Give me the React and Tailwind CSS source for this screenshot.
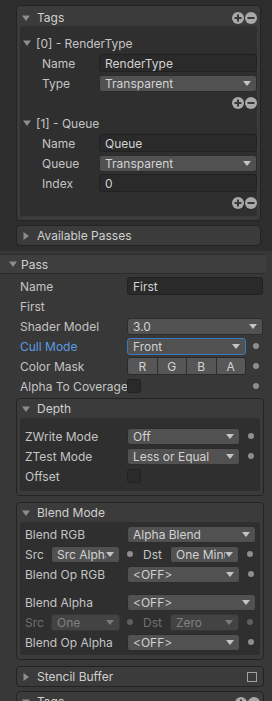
import React from 'react';

const TriDown = ({ c = '#8c8c8c' }) => (
  <svg width="8" height="8" viewBox="0 0 8 8" className="shrink-0">
    <polygon points="0,1.5 8,1.5 4,7" fill={c} />
  </svg>
);

const TriRight = ({ c = '#8c8c8c' }) => (
  <svg width="8" height="8" viewBox="0 0 8 8" className="shrink-0">
    <polygon points="1.5,0 7,4 1.5,8" fill={c} />
  </svg>
);

const Arrow = ({ c = '#c4c4c4' }) => (
  <svg width="8" height="5" viewBox="0 0 8 5" className="shrink-0">
    <polygon points="0,0 8,0 4,5" fill={c} />
  </svg>
);

const PlusMinus = () => (
  <div className="flex items-center gap-[1px]">
    <svg width="12" height="12" viewBox="0 0 12 12">
      <circle cx="6" cy="6" r="6" fill="#a9a9a9" />
      <path d="M6 2.5v7M2.5 6h7" stroke="#383838" strokeWidth="2" />
    </svg>
    <svg width="12" height="12" viewBox="0 0 12 12">
      <circle cx="6" cy="6" r="6" fill="#a9a9a9" />
      <path d="M2.5 6h7" stroke="#383838" strokeWidth="2" />
    </svg>
  </div>
);

const Dot = ({ dim }) => (
  <span className={`block w-[6px] h-[6px] rounded-full shrink-0 ${dim ? 'bg-[#5e5e5e]' : 'bg-[#8e8e8e]'}`} />
);

const Field = ({ children, className = '' }) => (
  <div className={`h-[18px] flex items-center px-[5px] rounded-[3px] bg-[#2a2a2a] border border-[#212121] text-[#d2d2d2] ${className}`}>
    {children}
  </div>
);

const Popup = ({ children, className = '', dim, focus }) => (
  <div
    className={`h-[17px] flex items-center pl-[5px] pr-[5px] rounded-[3px] border overflow-hidden whitespace-nowrap ${
      dim ? 'bg-[#434343] border-[#363636] text-[#808080]' : 'bg-[#515151] border-[#2c2c2c] text-[#d2d2d2]'
    } ${focus ? 'border-[#3a79bb]' : ''} ${className}`}
  >
    <span className="flex-1 overflow-hidden leading-[15px]">{children}</span>
    <Arrow c={dim ? '#7a7a7a' : '#c4c4c4'} />
  </div>
);

const Check = () => (
  <div className="w-[14px] h-[14px] rounded-[3px] bg-[#2a2a2a] border border-[#212121]" />
);

const Box = ({ title, open = true, right, children, className = '', bodyClass = '', headClass = '' }) => (
  <div className={`rounded-[4px] border border-[#232323] bg-[#3b3b3b] ${className}`}>
    <div className={`h-[19px] flex items-center pl-[5px] pr-[3px] ${headClass}`}>
      {open ? <TriDown /> : <TriRight />}
      <span className="ml-[7px] text-[#d0d0d0]">{title}</span>
      <div className="ml-auto flex items-center">{right}</div>
    </div>
    {children && (
      <div className={`mx-[3px] mb-[4px] rounded-[2px] bg-[#2f2f2f] ${bodyClass}`}>{children}</div>
    )}
  </div>
);

const ElemRow = ({ label, children }) => (
  <div className="h-[20px] flex items-center">
    <span className="w-[76px] pl-[19px] shrink-0">{label}</span>
    <div className="w-[160px]">{children}</div>
  </div>
);

const PMRow = () => (
  <div className="h-[20px] flex items-center justify-end">
    <PlusMinus />
  </div>
);

const PassRow = ({ label, labelClass = '', children }) => (
  <div className="h-[20px] flex items-center">
    <span className={`w-[107px] shrink-0 whitespace-nowrap overflow-hidden leading-[15px] ${labelClass}`}>{label}</span>
    <div className="flex-1 flex items-center">{children}</div>
  </div>
);

const InRow = ({ label, children, labelClass = '' }) => (
  <div className="h-[20px] flex items-center">
    <span className={`w-[102px] shrink-0 whitespace-nowrap ${labelClass}`}>{label}</span>
    <div className="flex-1 flex items-center">{children}</div>
  </div>
);

export default function App() {
  return (
    <div className="w-[272px] h-[701px] overflow-hidden bg-[#383838] font-[Inter,sans-serif] text-[12px] leading-[15px] text-[#c4c4c4]">
      {/* upper block */}
      <div className="bg-[#2d2d2d] pt-[5px] pb-[5px] pl-[16px] pr-[11px]">
        <Box
          title="Tags"
          headClass="pt-[3px] h-[20px]"
          right={<PlusMinus />}
          bodyClass="pt-[7px] pb-[3px] pl-[3px]"
        >
          <div className="h-[20px] flex items-center">
            <TriDown />
            <span className="ml-[5px]">[0] - RenderType</span>
          </div>
          <ElemRow label="Name">
            <Field>RenderType</Field>
          </ElemRow>
          <ElemRow label="Type">
            <Popup>Transparent</Popup>
          </ElemRow>
          <PMRow />
          <div className="h-[20px] flex items-center">
            <TriDown />
            <span className="ml-[5px]">[1] - Queue</span>
          </div>
          <ElemRow label="Name">
            <Field>Queue</Field>
          </ElemRow>
          <ElemRow label="Queue">
            <Popup>Transparent</Popup>
          </ElemRow>
          <ElemRow label="Index">
            <Field>0</Field>
          </ElemRow>
          <PMRow />
        </Box>
        <Box title="Available Passes" open={false} className="mt-[4px]" />
      </div>

      {/* Pass */}
      <div className="mr-[6px] mt-[3px]">
        <div className="h-[20px] flex items-center pl-[9px] bg-[#3e3e3e] border-y border-[#2a2a2a]">
          <TriDown />
          <span className="ml-[4px] text-[#d0d0d0]">Pass</span>
        </div>
        <div className="pl-[20px] pr-[3px] pt-[2px]">
          <PassRow label="Name">
            <Field className="flex-1">First</Field>
          </PassRow>
          <PassRow label="First" />
          <PassRow label="Shader Model">
            <Popup className="flex-1">3.0</Popup>
          </PassRow>
          <PassRow label="Cull Mode" labelClass="text-[#5a9be0]">
            <Popup className="w-[119px]" focus>Front</Popup>
            <span className="ml-[7px]"><Dot /></span>
          </PassRow>
          <PassRow label="Color Mask">
            <div className="w-[119px] h-[18px] flex rounded-[3px] overflow-hidden border border-[#2a2a2a]">
              {['R', 'G', 'B', 'A'].map((c, i) => (
                <div
                  key={c}
                  className={`flex-1 flex items-center justify-center text-[#d2d2d2] ${
                    i < 3 ? 'bg-[#565656] border-r border-[#2e2e2e]' : 'bg-[#585858]'
                  }`}
                >
                  {c}
                </div>
              ))}
            </div>
            <span className="ml-[7px]"><Dot /></span>
          </PassRow>
          <PassRow label="Alpha To Coverage">
            <div className="w-[119px]"><Check /></div>
            <span className="ml-[7px]"><Dot /></span>
          </PassRow>
        </div>

        <div className="pl-[16px] pr-[2px]">
          <Box title="Depth" className="mt-[2px]" bodyClass="pt-[8px] pb-[5px] pl-[5px] pr-[7px]">
            <InRow label="ZWrite Mode">
              <Popup className="w-[113px]">Off</Popup>
              <span className="ml-[8px]"><Dot /></span>
            </InRow>
            <InRow label="ZTest Mode">
              <Popup className="w-[113px]">Less or Equal</Popup>
              <span className="ml-[8px]"><Dot /></span>
            </InRow>
            <InRow label="Offset">
              <Check />
            </InRow>
          </Box>

          <Box title="Blend Mode" className="mt-[6px]" bodyClass="pt-[2px] pb-[3px] pl-[5px] pr-[4px]">
            <InRow label="Blend RGB">
              <Popup className="flex-1">Alpha Blend</Popup>
            </InRow>
            <div className="h-[20px] flex items-center">
              <span className="w-[26px] shrink-0">Src</span>
              <Popup className="w-[69px]">Src Alpha</Popup>
              <span className="ml-[7px]"><Dot /></span>
              <span className="ml-[10px] w-[27px]">Dst</span>
              <Popup className="w-[69px]">One Minus Src Alpha</Popup>
              <span className="ml-[8px]"><Dot /></span>
            </div>
            <InRow label="Blend Op RGB">
              <Popup className="w-[113px]">&lt;OFF&gt;</Popup>
              <span className="ml-[8px]"><Dot /></span>
            </InRow>
            <div className="h-[8px]" />
            <InRow label="Blend Alpha">
              <Popup className="flex-1">&lt;OFF&gt;</Popup>
            </InRow>
            <div className="h-[20px] flex items-center text-[#6f6f6f]">
              <span className="w-[26px] shrink-0">Src</span>
              <Popup className="w-[69px]" dim>One</Popup>
              <span className="ml-[7px]"><Dot dim /></span>
              <span className="ml-[10px] w-[27px]">Dst</span>
              <Popup className="w-[69px]" dim>Zero</Popup>
              <span className="ml-[8px]"><Dot dim /></span>
            </div>
            <InRow label="Blend Op Alpha">
              <Popup className="w-[113px]">&lt;OFF&gt;</Popup>
              <span className="ml-[8px]"><Dot /></span>
            </InRow>
          </Box>

          <Box
            title="Stencil Buffer"
            open={false}
            className="mt-[6px]"
            right={<div className="w-[10px] h-[10px] border border-[#a0a0a0] mr-[3px]" />}
          />
          <Box title="Tags" className="mt-[4px]" right={<div className="mt-[3px]"><PlusMinus /></div>} />
        </div>
      </div>
    </div>
  );
}
